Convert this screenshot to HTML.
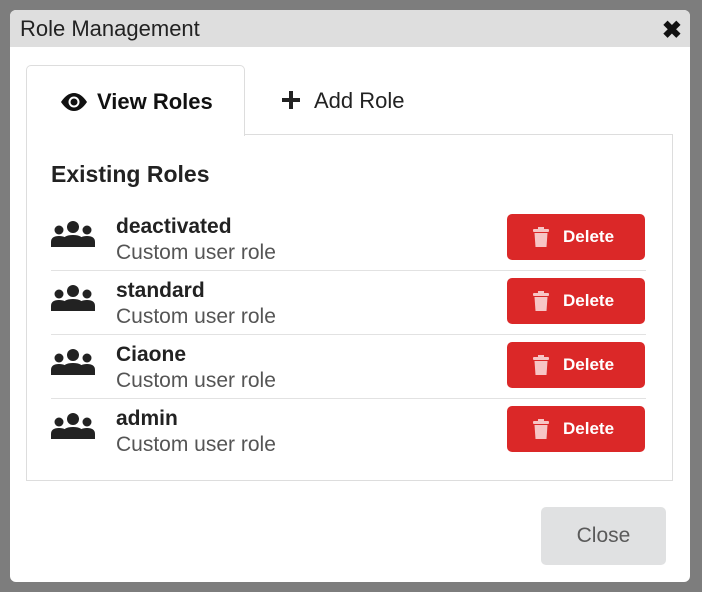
<!DOCTYPE html>
<html><head><style>
body{margin:0;width:702px;height:592px;background:#7d7d7d;font-family:"Liberation Sans",sans-serif;position:relative;overflow:hidden}
.modal{position:absolute;left:10px;top:10px;width:680px;height:572px;background:#fff;border-radius:6px;overflow:hidden}
.hdr{height:37px;background:#dedede;position:relative}
.hdr span{position:absolute;left:10px;top:6px;font-size:22px;color:#222}
.x{position:absolute;right:8px;top:6px;font-size:24px;font-weight:bold;color:#111}
.tab{position:absolute;left:16px;top:55px;width:217px;height:70px;border:1px solid #ddd;border-bottom:none;border-radius:5px 5px 0 0;background:#fff;z-index:2}
.tab2{position:absolute;left:272px;top:78px;font-size:22px;color:#222}
.panel{position:absolute;left:16px;top:124px;width:645px;height:345px;border:1px solid #ddd}
h3{position:absolute;left:24px;top:26px;margin:0;font-size:23px;font-weight:600;color:#222}
.row{position:absolute;left:24px;width:595px;height:57px;border-bottom:1px solid #e2e2e2}
.row .n{position:absolute;left:65px;top:2px;font-size:21px;font-weight:bold;color:#222}
.row .d{position:absolute;left:65px;top:28px;font-size:21px;color:#555}
.row svg.u{position:absolute;left:0;top:8px}
.del{position:absolute;left:456px;top:1px;width:138px;height:46px;background:#db2828;border-radius:5px;color:#fff;font-weight:bold;font-size:17px}
.del span{position:absolute;left:56px;top:13px}
.del svg{position:absolute;left:25px;top:13px}
.close{position:absolute;left:531px;top:497px;width:125px;height:58px;background:#e0e1e2;border-radius:5px;color:#5a5a5a;font-size:21px;text-align:center;line-height:58px}
</style></head><body>
<div class="modal">
<div class="hdr"><span>Role Management</span><div class="x">✖</div></div>
<div class="panel">
<h3>Existing Roles</h3>
<div class="row" style="top:78px"><svg class="u" width="44" height="26" viewBox="0 0 44 26"><circle cx="22" cy="6" r="6" fill="#222"/><circle cx="8" cy="9" r="4.5" fill="#222"/><circle cx="36" cy="9" r="4.5" fill="#222"/><path d="M12 26v-6q0-6 10-6t10 6v6z" fill="#222"/><path d="M0 26v-5q0-6 8-6t8 5v6zM28 26v-6q0-5 8-5t8 6v5z" fill="#222"/></svg><div class="n">deactivated</div><div class="d">Custom user role</div><div class="del"><svg width="18" height="20" viewBox="0 0 18 20"><rect x="1" y="2" width="16" height="3" rx="1" fill="#f7c5c5"/><rect x="6" y="0" width="6" height="3" fill="#f7c5c5"/><path d="M2.5 6h13l-1 14h-11z" fill="#f7c5c5"/></svg><span>Delete</span></div></div>
<div class="row" style="top:142px"><svg class="u" width="44" height="26" viewBox="0 0 44 26"><circle cx="22" cy="6" r="6" fill="#222"/><circle cx="8" cy="9" r="4.5" fill="#222"/><circle cx="36" cy="9" r="4.5" fill="#222"/><path d="M12 26v-6q0-6 10-6t10 6v6z" fill="#222"/><path d="M0 26v-5q0-6 8-6t8 5v6zM28 26v-6q0-5 8-5t8 6v5z" fill="#222"/></svg><div class="n">standard</div><div class="d">Custom user role</div><div class="del"><svg width="18" height="20" viewBox="0 0 18 20"><rect x="1" y="2" width="16" height="3" rx="1" fill="#f7c5c5"/><rect x="6" y="0" width="6" height="3" fill="#f7c5c5"/><path d="M2.5 6h13l-1 14h-11z" fill="#f7c5c5"/></svg><span>Delete</span></div></div>
<div class="row" style="top:206px"><svg class="u" width="44" height="26" viewBox="0 0 44 26"><circle cx="22" cy="6" r="6" fill="#222"/><circle cx="8" cy="9" r="4.5" fill="#222"/><circle cx="36" cy="9" r="4.5" fill="#222"/><path d="M12 26v-6q0-6 10-6t10 6v6z" fill="#222"/><path d="M0 26v-5q0-6 8-6t8 5v6zM28 26v-6q0-5 8-5t8 6v5z" fill="#222"/></svg><div class="n">Ciaone</div><div class="d">Custom user role</div><div class="del"><svg width="18" height="20" viewBox="0 0 18 20"><rect x="1" y="2" width="16" height="3" rx="1" fill="#f7c5c5"/><rect x="6" y="0" width="6" height="3" fill="#f7c5c5"/><path d="M2.5 6h13l-1 14h-11z" fill="#f7c5c5"/></svg><span>Delete</span></div></div>
<div class="row" style="top:270px;border-bottom:none"><svg class="u" width="44" height="26" viewBox="0 0 44 26"><circle cx="22" cy="6" r="6" fill="#222"/><circle cx="8" cy="9" r="4.5" fill="#222"/><circle cx="36" cy="9" r="4.5" fill="#222"/><path d="M12 26v-6q0-6 10-6t10 6v6z" fill="#222"/><path d="M0 26v-5q0-6 8-6t8 5v6zM28 26v-6q0-5 8-5t8 6v5z" fill="#222"/></svg><div class="n">admin</div><div class="d">Custom user role</div><div class="del"><svg width="18" height="20" viewBox="0 0 18 20"><rect x="1" y="2" width="16" height="3" rx="1" fill="#f7c5c5"/><rect x="6" y="0" width="6" height="3" fill="#f7c5c5"/><path d="M2.5 6h13l-1 14h-11z" fill="#f7c5c5"/></svg><span>Delete</span></div></div>
</div>
<div class="tab"><svg style="position:absolute;left:34px;top:27px" width="26" height="18" viewBox="0 0 26 18"><path d="M0 9Q6 0 13 0T26 9Q20 18 13 18T0 9z" fill="#111"/><circle cx="13" cy="9" r="5.5" fill="#fff"/><circle cx="13" cy="9" r="3.5" fill="#111"/></svg><span style="position:absolute;left:70px;top:23px;font-size:22px;font-weight:600;color:#111">View Roles</span></div>
<svg style="position:absolute;left:272px;top:81px" width="18" height="18" viewBox="0 0 18 18"><path d="M7 0h4v7h7v4h-7v7h-4v-7h-7v-4h7z" fill="#222"/></svg>
<div class="tab2" style="left:304px">Add Role</div>
<div class="close">Close</div>
</div>
</body></html>
